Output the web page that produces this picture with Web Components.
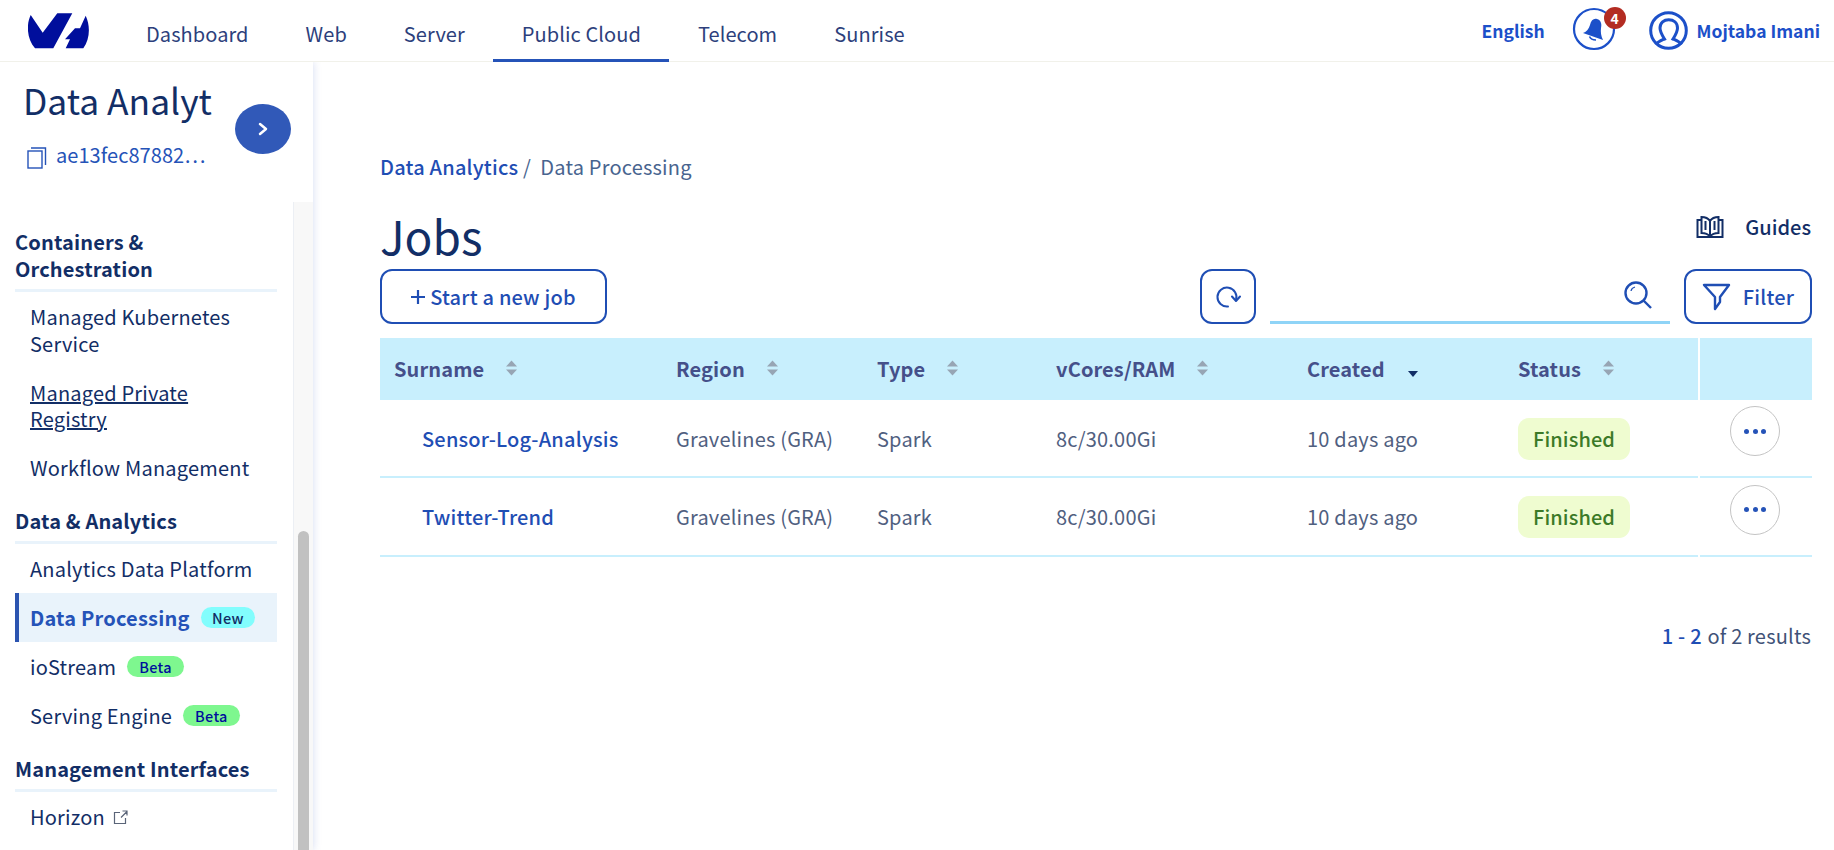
<!DOCTYPE html>
<html lang="en"><head><meta charset="utf-8"><title>Jobs</title>
<style>
html,body{margin:0;height:100%;overflow:hidden;background:#fff}
body{font-family:"Noto Sans CJK SC","Noto Sans",sans-serif;color:#122e66}
</style></head><body>
<ovh-app>
  <ovh-header slot="header"></ovh-header>
  <ovh-sidebar slot="sidebar"></ovh-sidebar>
  <jobs-page></jobs-page>
</ovh-app>
<script>
function def(name,html){
  customElements.define(name,class extends HTMLElement{
    constructor(){super();const s=this.attachShadow({mode:'open'});s.innerHTML=typeof html==='function'?html(this):html;}
    connectedCallback(){if(typeof html==='function'&&!this._i){this._i=1;this.shadowRoot.innerHTML=html(this)}}
  });
}
def('ovh-app',`<style>
:host{display:grid;grid-template-columns:313px 1fr;grid-template-rows:62px 788px;height:850px;width:1834px;overflow:hidden}
.h{grid-column:1/3;display:block}
</style><div class="h"><slot name="header"></slot></div><slot name="sidebar"></slot><slot></slot>`);

def('nav-tab',`<style>
:host{display:flex;align-items:center;height:62px;box-sizing:border-box;padding:5px 28.5px 0;font-size:20px;line-height:24px;color:#2d3f7c;white-space:nowrap;letter-spacing:.08px}
:host([active]){border-bottom:3px solid #2553b8;padding-top:8px}
</style><slot></slot>`);

def('ovh-header',`<style>
:host{display:flex;align-items:center;height:62px;box-sizing:border-box;border-bottom:1px solid #f1f1ea;padding:0 0 0 28px;background:#fff;position:relative;z-index:3}
.logo{width:62px;height:37px;margin-right:27.500px;flex:none;margin-top:1px}
nav{display:flex;height:62px;margin-bottom:-1px}
.right{margin-left:auto;display:flex;align-items:center;color:#1c50c9;font-weight:700;font-size:17.500px;line-height:24px}
.lang{margin-right:27px}
.bell{position:relative;width:44px;height:44px;margin-right:33px;flex:none;margin-top:-3px}
.bell svg{display:block}
.badge{position:absolute;left:32px;top:0;width:22px;height:22px;border-radius:50%;background:#b32c22;color:#fff;font-size:14px;line-height:22px;text-align:center;font-weight:700}
.user{display:flex;align-items:center;gap:9px;margin-right:14px}
</style>
<svg class="logo" viewBox="0 0 62 37"><path fill="#000e9c" d="M2.700 2 L14.700 19.700 L29.300 .3 L44.300 .3 L25.300 35.300 L7 35.300 C-1 26 -2 12 2.700 2Z"/><path fill="#000e9c" d="M57.700 2.700 C62.500 13 62 26 55.300 35.300 L37.700 35.300 L42 26.300 L37 26.300 L47 15.300 L52 15.300Z"/></svg>
<nav><nav-tab>Dashboard</nav-tab><nav-tab>Web</nav-tab><nav-tab>Server</nav-tab><nav-tab active>Public Cloud</nav-tab><nav-tab>Telecom</nav-tab><nav-tab>Sunrise</nav-tab></nav>
<div class="right"><span class="lang">English</span>
<div class="bell"><svg width="44" height="44" viewBox="0 0 44 44"><circle cx="22" cy="22" r="20" fill="none" stroke="#1c50c9" stroke-width="2.200"/><path fill="#1c50c9" d="M25 12 C29 13 30 17 29 21 C28.500 25 29 29 31 33 L11 26 C14 25 17 22 18 18 C19 13 22 11 25 12Z"/><path fill="none" stroke="#1c50c9" stroke-width="1.500" d="M17.500 29.500 C18.500 32 21 33 24 33"/></svg><span class="badge">4</span></div>
<div class="user"><svg width="39" height="39" viewBox="0 0 39 39" fill="none" stroke="#1c50c9" stroke-width="3"><circle cx="19.500" cy="19.500" r="17.800"/><path d="M7 33.500 C9 30.500 12 29.500 15.500 28 C13 24 11 21 11 17 C11 11.500 15 8.700 19.700 8.700 C24.500 8.700 28.500 11.500 28.500 17 C28.500 21 26.500 24 24 28 C27.500 29.500 30.500 30.500 32.500 33.500"/></svg><span>Mojtaba Imani</span></div>
</div>`);

def('side-section',`<style>
:host{display:block;padding:0 0 0 15px;width:262px}
.t{font-size:20px;font-weight:700;line-height:27px;color:#122e66;border-bottom:3px solid #e9f3fb;padding-bottom:7px;letter-spacing:.15px}
</style><div class="t"><slot name="title"></slot></div><slot></slot>`);

def('side-item',`<style>
:host{display:block;box-sizing:border-box;padding:12.250px 20px 10.250px 15px;font-size:20px;line-height:26.500px;color:#122e66;letter-spacing:.2px}
:host([active]){background:#e9f3fb;color:#2553b8;font-weight:700;border-left:4px solid #2b54b0;padding-left:11px;padding-right:0}
:host([u]) span.x{text-decoration:underline}
</style><span class="x"><slot></slot></span>`);

def('pill-tag',`<style>
:host{display:inline-block;font-size:14.500px;line-height:21px;height:21px;border-radius:11px;padding:0 12px;margin-left:11px;vertical-align:2px;font-weight:500;background:#7ef78f;color:#000e9c;letter-spacing:.3px}
:host([new]){background:#82fdfd;color:#122e66;padding:0 11.500px}
</style><slot></slot>`);

def('ovh-sidebar',`<style>
:host{display:flex;flex-direction:column;height:788px;width:313px;box-shadow:0 0 8px rgba(60,90,190,.22);position:relative;z-index:2;background:#fff;overflow:hidden}
.top{height:140px;flex:none;padding:13px 0 0 23px;box-sizing:border-box;position:relative}
h2{margin:0;font-weight:400;font-size:35.400px;line-height:50px;color:#122e66;white-space:nowrap}
.id{display:flex;align-items:center;gap:9px;margin-top:17px;color:#2553b8;font-size:20px;line-height:26px;margin-left:4px;letter-spacing:.05px}
.id span{margin-bottom:4px}
.go{position:absolute;left:235px;top:42px;width:56px;height:50px;border-radius:50%;background:#3159b8;display:flex;align-items:center;justify-content:center}
.body{flex:1;display:flex;min-height:0}
.list{width:293px;flex:none;overflow:hidden}
.track{width:20px;flex:none;background:#f8f8f8;border-left:1px solid #eceff4;box-sizing:border-box;display:flex;flex-direction:column;padding:329px 0 0 4px}
.thumb{width:11px;flex:1;background:#c1c1c1;border-radius:6px 6px 0 0;margin-bottom:-10px}
side-section+side-section{margin-top:15px}
</style>
<div class="top"><h2>Data Analyt</h2>
<div class="id"><svg width="20" height="23" viewBox="0 0 20 23" fill="none" stroke="#2553b8" stroke-width="1.400"><rect x="1" y="5" width="14" height="17"/><path d="M4 2 H18.500 V19"/></svg><span>ae13fec87882…</span></div>
<div class="go"><svg width="12" height="14" viewBox="0 0 12 14" fill="none" stroke="#fff" stroke-width="2.500" stroke-linecap="round" stroke-linejoin="round"><path d="M3 2 L9 7 L3 12"/></svg></div></div>
<div class="body"><div class="list">
<side-section style="margin-top:26px"><span slot="title">Containers &amp; Orchestration</span>
<side-item>Managed Kubernetes Service</side-item><side-item u>Managed Private Registry</side-item><side-item>Workflow Management</side-item></side-section>
<side-section><span slot="title">Data &amp; Analytics</span>
<side-item>Analytics Data Platform</side-item><side-item active>Data Processing<pill-tag new>New</pill-tag></side-item><side-item>ioStream<pill-tag>Beta</pill-tag></side-item><side-item>Serving Engine<pill-tag>Beta</pill-tag></side-item></side-section>
<side-section><span slot="title">Management Interfaces</span>
<side-item>Horizon<svg width="15" height="15" viewBox="0 0 15 15" fill="none" stroke="#5a6478" stroke-width="1.200" style="margin-left:8px"><path d="M7 2.500H1.500V13.500H12.500V8M8 7.500L14 1.500M9.500 1H14V5.500"/></svg></side-item></side-section>
</div><div class="track"><div class="thumb"></div></div></div>`);

def('outline-btn',`<style>
:host{display:inline-flex;align-items:center;justify-content:center;height:55px;box-sizing:border-box;border:2.700px solid #1f4eb4;border-radius:12px;color:#1f4eb4;font-size:20px;font-weight:500;line-height:24px;background:#fff;white-space:nowrap;letter-spacing:.2px}
</style><slot></slot>`);

def('sort-ic',`<style>:host{display:inline-block;width:11px;height:16px;margin-left:22px;vertical-align:1px}
svg{display:block}</style><svg width="11" height="16" viewBox="0 0 11 16" fill="#97a5b4"><path d="M5.500 0.500 L11 6.500 H0Z"/><path d="M0 9.500 H11 L5.500 15.500Z"/></svg>`);

def('job-row',(h)=>`<style>
:host{display:grid;grid-template-columns:296px 201px 179px 251px 211px 180px 1fr;height:78.400px;box-sizing:border-box;border-bottom:2px solid #c8effd;padding-top:1px;align-items:center;font-size:20px;line-height:26px;color:#50607f;white-space:nowrap;position:relative;letter-spacing:.2px}
.n{padding-left:42px;color:#1f4eb4;font-weight:500}
.st{display:inline-block;background:#effcd0;color:#3c7a28;font-weight:500;height:42px;line-height:42px;padding:0 15px;border-radius:11px;letter-spacing:.1px}
.more{width:50px;height:50px;border:1.500px solid #c4c4c4;border-radius:50%;box-sizing:border-box;margin-left:32px;margin-bottom:15px;display:flex;align-items:center;justify-content:center;gap:3.500px}
.more i{width:5px;height:5px;border-radius:50%;background:#2553b8}
.gap{position:absolute;left:1318px;top:70px;width:2px;height:8.400px;background:#fff}
</style>
<div class="n">${h.getAttribute('name')}</div><div>Gravelines (GRA)</div><div>Spark</div><div>8c/30.00Gi</div><div>10 days ago</div><div><span class="st">Finished</span></div><div><div class="more"><i></i><i></i><i></i></div></div><div class="gap"></div>`);

def('job-table',`<style>
:host{display:block}
.head{display:grid;grid-template-columns:282px 201px 179px 251px 211px 180px 2px 1fr;height:62px;align-items:center;background:#c8effd;padding-left:14px;font-size:20px;font-weight:700;color:#45508a;line-height:24px;white-space:nowrap;letter-spacing:.12px}
.sep{background:#fff;height:100%}
.dn{display:inline-block;margin-left:23px;width:0;height:0;border:5px solid transparent;border-top:6px solid #122e66;border-bottom:0;vertical-align:0}
</style>
<div class="head"><div>Surname<sort-ic></sort-ic></div><div>Region<sort-ic></sort-ic></div><div>Type<sort-ic></sort-ic></div><div>vCores/RAM<sort-ic></sort-ic></div><div>Created<span class="dn"></span></div><div>Status<sort-ic></sort-ic></div><div class="sep"></div><div></div></div>
<job-row name="Sensor-Log-Analysis"></job-row><job-row name="Twitter-Trend"></job-row>`);

def('jobs-page',`<style>
:host{display:block;padding:0 22px 0 67px;min-width:0;background:#fff}
.bc{margin-top:91px;font-size:20px;line-height:28px;color:#48648f;white-space:nowrap;letter-spacing:.2px}
.bc b{color:#1f4eb4;font-weight:500}
.ttl{display:flex;justify-content:space-between;height:61px;margin-top:27px;align-items:flex-start}
h1{margin:0;font-weight:400;font-size:46px;line-height:54px;color:#122e66}
.g{display:flex;align-items:center;gap:21px;font-size:20px;color:#122e66;line-height:24px;margin-top:7px;font-weight:500;margin-right:1px}
.bar{display:flex;align-items:center;height:55px}
.search{width:400px;height:55px;box-sizing:border-box;border-bottom:3px solid #8fd4f7;margin:0 14px 0 14px;display:flex;align-items:center;justify-content:flex-end;padding-right:17px}
.sp{flex:1}
.pg{text-align:right;margin-top:65px;margin-right:1px;font-size:20px;line-height:28px;color:#3f5278;letter-spacing:.2px}
.pg b{font-weight:500;color:#1f4eb4;margin-right:1px}
job-table{margin-top:14px}
</style>
<div class="bc"><b>Data Analytics</b> /&nbsp; Data Processing</div>
<div class="ttl"><h1>Jobs</h1><div class="g"><svg width="28" height="24" viewBox="0 0 28 24" fill="none" stroke="#122e66" stroke-width="2"><path d="M5 5 H1.500 V22 H26.500 V5 H23"/><path d="M14 6 C12 3 9 2 5.500 2 V18 C9 18 12 19 14 21.500 C16 19 19 18 22.500 18 V2 C19 2 16 3 14 6Z M14 6 V21 M9.500 6V15 M18.500 6V15"/></svg><span>Guides</span></div></div>
<div class="bar"><outline-btn style="width:227px"><svg width="14" height="14" viewBox="0 0 14 14" stroke="#1f4eb4" stroke-width="2.200" style="margin-right:5px"><path d="M7 0V14M0 7H14"/></svg>Start a new job</outline-btn><span class="sp"></span>
<outline-btn style="width:56px"><svg width="26" height="26" viewBox="0 0 26 26" fill="none" stroke="#1f4eb4" stroke-width="2" stroke-linecap="round" stroke-linejoin="round"><path d="M13 22.500 A9.500 9.500 0 1 1 21 16"/><path d="M17 12.500 L21 17 L25 12.500"/></svg></outline-btn>
<div class="search"><svg width="30" height="30" viewBox="0 0 30 30" fill="none" stroke="#1f4eb4" stroke-width="2.400"><circle cx="13" cy="13" r="10.500"/><path d="M20.500 20.500L28 28"/><path d="M8 11 C8.500 8.500 10 7.500 12 7" stroke-width="1.200"/></svg></div>
<outline-btn style="width:128px"><svg width="30" height="28" viewBox="0 0 30 28" fill="none" stroke="#1f4eb4" stroke-width="2.400" stroke-linejoin="round" style="margin-right:11px"><path d="M2 2 H27 L18 14 V19 L13 26 V14Z"/></svg>Filter</outline-btn></div>
<job-table></job-table>
<div class="pg"><b>1 - 2</b> of 2 results</div>`);
</script></body></html>
